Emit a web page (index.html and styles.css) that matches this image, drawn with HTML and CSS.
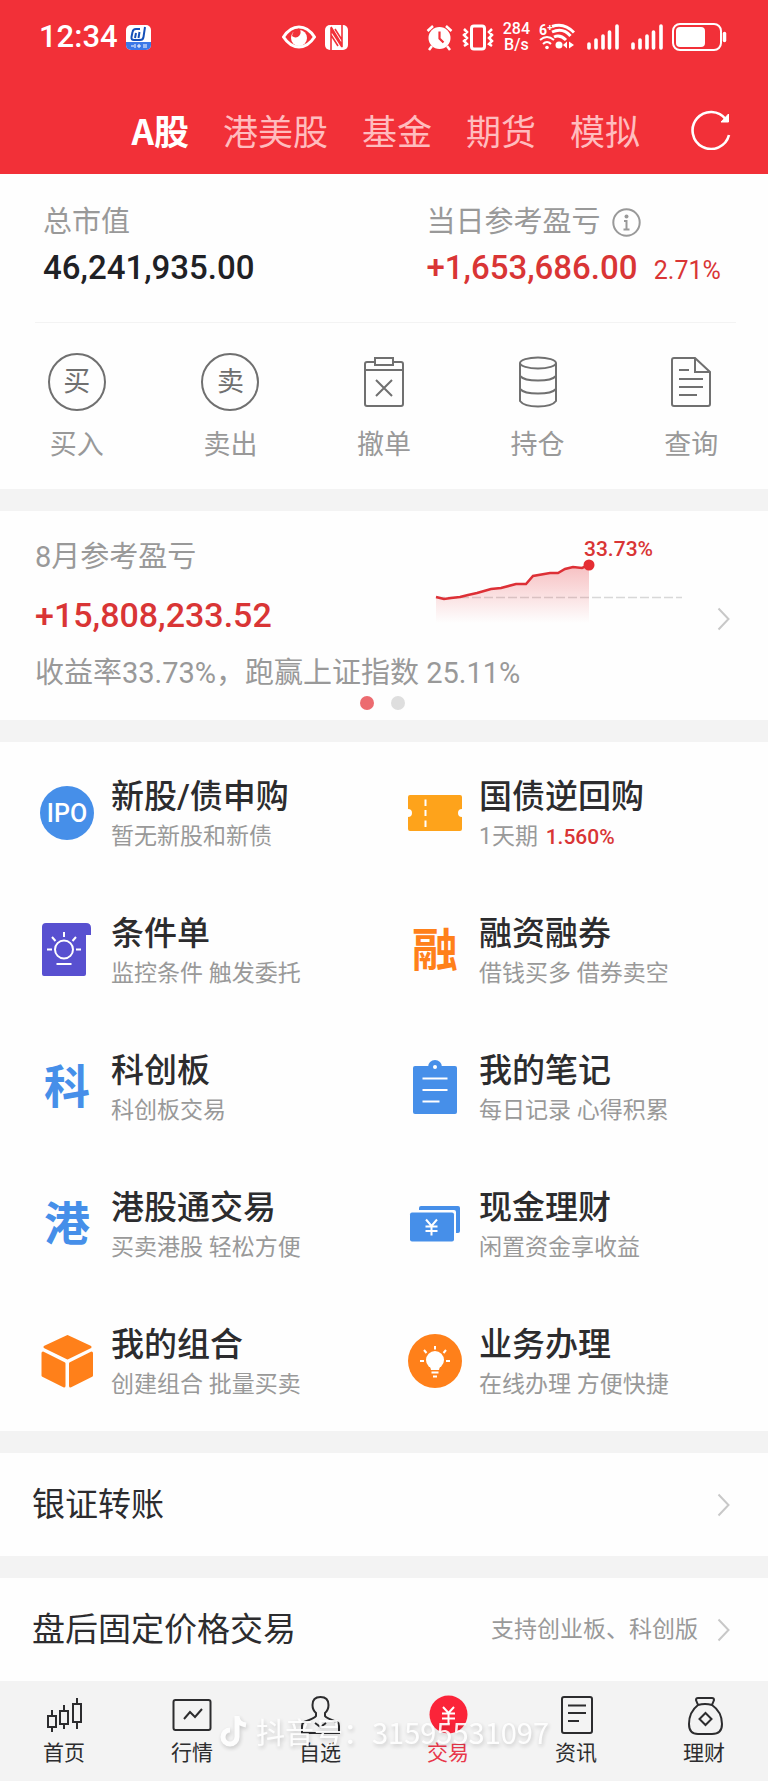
FILE: index.html
```
<!DOCTYPE html>
<html lang="zh-CN">

<head>
    <meta charset="UTF-8">
    <meta name="viewport" content="width=device-width, initial-scale=1.0">
    <title>交易</title>
    <link rel="stylesheet" href="styles.css">
</head>

<body>
    <header class="header">
        <div class="status-bar">
            <span class="clock">12:34</span>
            <svg class="app-badge" width="25" height="25" viewBox="0 0 25 25">
                <defs>
                    <clipPath id="badgeClip"><rect width="25" height="25" rx="5"/></clipPath>
                </defs>
                <g clip-path="url(#badgeClip)">
                    <rect width="25" height="25" fill="#fff"/>
                    <rect y="17" width="25" height="8" fill="#3b78e8"/>
                    <path d="M14 4H10Q7 4 6.500 7L5.500 12Q5 15 8 15H14Q17 15 17.500 12L19 2M10 8L9 13M13.500 7L12.500 13" fill="none" stroke="#1550b8" stroke-width="2"/>
                    <path d="M5 21h3M9 19v4M11 21h4M13 19v4M17 20h4M17 22h4" fill="none" stroke="#fff" stroke-width="1"/>
                </g>
            </svg>
            <div class="status-mid">
                <svg width="34" height="24" viewBox="0 0 34 24">
                    <path d="M1.500 12Q8 2 17 2T32.500 12Q26 22 17 22T1.500 12Z" fill="none" stroke="#fff" stroke-width="3"/>
                    <circle cx="17" cy="13" r="8" fill="#fff"/>
                    <path d="M17 3.500A5 5 0 0 1 10 11A8 8 0 0 1 17 3.500Z" fill="#f23038"/>
                </svg>
                <svg width="24" height="25" viewBox="0 0 24 25">
                    <rect width="23" height="25" rx="5" fill="#fff"/>
                    <path d="M6 25V5L17 22M17 0V20L6 2M6 10L13 21M17 15L10 4" fill="none" stroke="#f23038" stroke-width="1.600"/>
                </svg>
            </div>
            <div class="status-right">
                <svg width="27" height="27" viewBox="0 0 27 27">
                    <circle cx="13.500" cy="14" r="11" fill="#fff"/>
                    <path d="M1.500 7L7 2M20 2L25.500 7M6 22L3 26M21 22L24 26" stroke="#fff" stroke-width="2.500" fill="none"/>
                    <path d="M13.500 7.500V14.500L17.500 18.500" stroke="#f23038" stroke-width="2.200" fill="none"/>
                </svg>
                <svg width="32" height="27" viewBox="0 0 32 27">
                    <rect x="9.500" y="2" width="13" height="23" rx="2.500" fill="none" stroke="#fff" stroke-width="3"/>
                    <path d="M2 5L5 8L2 11L5 14L2 17L5 20L2 22M30 5L27 8L30 11L27 14L30 17L27 20L30 22" fill="none" stroke="#fff" stroke-width="2.500"/>
                </svg>
                <span class="net-speed">284<br>B/s</span>
                <svg width="36" height="28" viewBox="0 0 36 28">
                    <g fill="none" stroke="#fff" stroke-width="3">
                        <path d="M13 3.500Q25 -1 35 9.500"/>
                        <path d="M13 9Q24 4 31.500 13"/>
                        <path d="M15 14Q21 11 27 17"/>
                        <path d="M1 17Q8 11 15 17" stroke-width="2"/>
                        <path d="M4 21Q8 17 12 21" stroke-width="2"/>
                    </g>
                    <circle cx="8" cy="24.500" r="1.800" fill="#fff"/>
                    <circle cx="20" cy="22" r="3.500" fill="#fff"/>
                    <path d="M28 18.500V25.500L24 22ZM30 18.500V25.500L35 22Z" fill="#fff"/>
                    <text x="0" y="12" class="wifi-text">6⁺</text>
                </svg>
                <svg class="signal" width="32" height="26" viewBox="0 0 32 26">
                    <path d="M2 20V24M9 16V24M16 12V24M22.500 8V24M30 2V24" fill="none" stroke="#fff" stroke-width="3.600" stroke-linecap="round"/>
                </svg>
                <svg class="signal" width="32" height="26" viewBox="0 0 32 26">
                    <path d="M2 20V24M9 16V24M16 12V24M22.500 8V24M30 2V24" fill="none" stroke="#fff" stroke-width="3.600" stroke-linecap="round"/>
                </svg>
                <svg width="55" height="28" viewBox="0 0 55 28">
                    <rect x="1" y="1" width="48" height="26" rx="7" fill="none" stroke="#fff" stroke-width="2"/>
                    <rect x="4" y="4" width="29" height="20" rx="4" fill="#fff"/>
                    <path d="M52.500 10.500V17.500" stroke="#fff" stroke-width="3.500" stroke-linecap="round"/>
                </svg>
            </div>
        </div>
        <div class="market-tabs">
            <button class="market-tab active">A股</button>
            <button class="market-tab">港美股</button>
            <button class="market-tab">基金</button>
            <button class="market-tab">期货</button>
            <button class="market-tab">模拟</button>
            <button class="refresh" aria-label="刷新">
                <svg width="40" height="40" viewBox="0 0 40 40">
                    <path d="M35 9.500A18.500 18.500 0 1 0 38 25" fill="none" stroke="#fff" stroke-width="2.600"/>
                    <path d="M37.500 4V12H30Z" fill="#fff" stroke="#fff" stroke-width="1"/>
                </svg>
            </button>
        </div>
    </header>

    <main class="content">
        <section class="assets">
            <div class="asset-row">
                <div class="asset">
                    <div class="asset-label">总市值</div>
                    <div class="amount">46,241,935.00</div>
                </div>
                <div class="asset">
                    <div class="asset-label">当日参考盈亏
                        <svg width="29" height="29" viewBox="0 0 29 29">
                            <circle cx="14.500" cy="14.500" r="13.200" fill="none" stroke="#999" stroke-width="2"/>
                            <circle cx="14.500" cy="8.500" r="2" fill="#999"/>
                            <path d="M12 13H14.500V21M11.500 21.500H17.500" fill="none" stroke="#999" stroke-width="2"/>
                        </svg>
                    </div>
                    <div class="amount up">+1,653,686.00 <span class="percent">2.71%</span></div>
                </div>
            </div>
            <div class="actions">
                <a class="action" href="#">
                    <span class="action-icon round">买</span>
                    <span>买入</span>
                </a>
                <a class="action" href="#">
                    <span class="action-icon round">卖</span>
                    <span>卖出</span>
                </a>
                <a class="action" href="#">
                    <svg class="action-icon" viewBox="0 0 58 58">
                        <path d="M20 9H12Q10 9 10 11V51Q10 53 12 53H46Q48 53 48 51V11Q48 9 46 9H38M10 17H48M20 5H38V12H20ZM21 27L37 43M37 27L21 43"/>
                    </svg>
                    <span>撤单</span>
                </a>
                <a class="action" href="#">
                    <svg class="action-icon" viewBox="0 0 58 58">
                        <ellipse cx="29" cy="10" rx="18" ry="5.500"/>
                        <path d="M11 10V48Q15 53.500 29 53.500T47 48V10M11 23Q15 27.500 29 27.500T47 23M11 36Q15 40.500 29 40.500T47 36"/>
                    </svg>
                    <span>持仓</span>
                </a>
                <a class="action" href="#">
                    <svg class="action-icon" viewBox="0 0 58 58">
                        <path d="M12 5H33L48 19V51Q48 53 46 53H12Q10 53 10 51V7Q10 5 12 5ZM33 5V19H48M17 17H27M17 26H41M17 34H41M17 42H35"/>
                    </svg>
                    <span>查询</span>
                </a>
            </div>
        </section>

        <section class="profit">
            <div class="profit-top">
                <div class="profit-text">
                    <div class="asset-label">8月参考盈亏</div>
                    <div class="amount up">+15,808,233.52</div>
                </div>
                <svg class="chart" width="246" height="90" viewBox="0 0 246 90">
                    <defs>
                        <linearGradient id="area" x1="0" y1="0" x2="0" y2="1">
                            <stop offset="0" stop-color="#e52d33" stop-opacity="0.300"/>
                            <stop offset="1" stop-color="#e52d33" stop-opacity="0"/>
                        </linearGradient>
                    </defs>
                    <path d="M0 58.500H246" stroke="#d8d8d8" stroke-width="1.500" stroke-dasharray="9 3"/>
                    <path d="M0 58L8 60L15 59L24 58L32 56L41 54L55 50L65 49L80 45L90 45L97 37L114 34L122 34L129 30L137 28L146 29L153 26V84H0Z" fill="url(#area)"/>
                    <path d="M0 58L8 60L15 59L24 58L32 56L41 54L55 50L65 49L80 45L90 45L97 37L114 34L122 34L129 30L137 28L146 29L153 26" fill="none" stroke="#dd3036" stroke-width="2.500"/>
                    <circle cx="153" cy="26" r="5.500" fill="#e52d33"/>
                    <text x="148" y="17" class="chart-label">33.73%</text>
                </svg>
                <svg class="chevron" width="13" height="24" viewBox="0 0 13 24"><path d="M1.500 1.500L11.500 12L1.500 22.500"/></svg>
            </div>
            <div class="profit-note">收益率33.73%&#xFF0C;跑赢上证指数 25.11%</div>
            <div class="dots"><span class="dot on"></span><span class="dot"></span></div>
        </section>

        <section class="services">
            <a class="service" href="#">
                <svg class="service-icon" viewBox="0 0 54 54">
                    <circle cx="27" cy="27" r="27" fill="#468fe9"/>
                    <text x="27" y="36" class="ipo-text">IPO</text>
                </svg>
                <span class="service-text">
                    <span class="service-title">新股/债申购</span>
                    <span class="service-sub">暂无新股和新债</span>
                </span>
            </a>
            <a class="service" href="#">
                <svg class="service-icon" viewBox="0 0 54 54">
                    <path d="M2 9H52Q54 9 54 11V23A4 4 0 0 0 54 31V43Q54 45 52 45H2Q0 45 0 43V31A4 4 0 0 0 0 23V11Q0 9 2 9Z" fill="#fea31b"/>
                    <path d="M17.500 13.500V20M17.500 24V30M17.500 34.500V41" stroke="#fff" stroke-width="2"/>
                </svg>
                <span class="service-text">
                    <span class="service-title">国债逆回购</span>
                    <span class="service-sub">1天期 <b class="rate">1.560%</b></span>
                </span>
            </a>
            <a class="service" href="#">
                <svg class="service-icon" viewBox="0 0 54 54">
                    <path d="M6 0H46Q51 0 51 5V12H46V51Q46 53 44 53H4Q2 53 2 51V4Q2 0 6 0Z" fill="#5850d0"/>
                    <g fill="none" stroke="#fff" stroke-width="2">
                        <circle cx="24" cy="26.500" r="9"/>
                        <path d="M24 9V14M12 14L15.500 18M36 14L32.500 18M7 26.500H12M36 26.500H41M16.500 41H31.500"/>
                    </g>
                </svg>
                <span class="service-text">
                    <span class="service-title">条件单</span>
                    <span class="service-sub">监控条件 触发委托</span>
                </span>
            </a>
            <a class="service" href="#">
                <span class="service-icon char orange">融</span>
                <span class="service-text">
                    <span class="service-title">融资融券</span>
                    <span class="service-sub">借钱买多 借券卖空</span>
                </span>
            </a>
            <a class="service" href="#">
                <span class="service-icon char blue">科</span>
                <span class="service-text">
                    <span class="service-title">科创板</span>
                    <span class="service-sub">科创板交易</span>
                </span>
            </a>
            <a class="service" href="#">
                <svg class="service-icon" viewBox="0 0 54 54">
                    <circle cx="27" cy="7" r="7" fill="#468fe9"/>
                    <rect x="5" y="6" width="44" height="48" rx="2" fill="#468fe9"/>
                    <circle cx="27" cy="7" r="2" fill="#fff"/>
                    <path d="M14.500 18.500H39.500M14.500 30H39.500M14.500 41.500H31.500" stroke="#fff" stroke-width="2"/>
                </svg>
                <span class="service-text">
                    <span class="service-title">我的笔记</span>
                    <span class="service-sub">每日记录 心得积累</span>
                </span>
            </a>
            <a class="service" href="#">
                <span class="service-icon char blue">港</span>
                <span class="service-text">
                    <span class="service-title">港股通交易</span>
                    <span class="service-sub">买卖港股 轻松方便</span>
                </span>
            </a>
            <a class="service" href="#">
                <svg class="service-icon" viewBox="0 0 54 54">
                    <path d="M11 13V11Q11 9 13 9H50Q52 9 52 11V34Q52 36 50 36H48V15Q48 13 46 13Z" fill="#468fe9"/>
                    <rect x="2" y="15.500" width="44" height="29" rx="2" fill="#468fe9"/>
                    <path d="M18 22.500L23.500 29L29 22.500M17.500 29.500H29.500M17.500 34H29.500M23.500 29V38.500" fill="none" stroke="#fff" stroke-width="2"/>
                </svg>
                <span class="service-text">
                    <span class="service-title">现金理财</span>
                    <span class="service-sub">闲置资金享收益</span>
                </span>
            </a>
            <a class="service" href="#">
                <svg class="service-icon" viewBox="0 0 54 54">
                    <g fill="#ff801a" stroke="#ff801a" stroke-width="3" stroke-linejoin="round">
                        <path d="M27.500 2.500L50 13L27.500 24L5 13Z"/>
                        <path d="M3 19L24 29.500V52L3 41.500Z"/>
                        <path d="M51.500 19L30.500 29.500V52L51.500 41.500Z"/>
                    </g>
                </svg>
                <span class="service-text">
                    <span class="service-title">我的组合</span>
                    <span class="service-sub">创建组合 批量买卖</span>
                </span>
            </a>
            <a class="service" href="#">
                <svg class="service-icon" viewBox="0 0 54 54">
                    <circle cx="27" cy="27" r="27" fill="#ff801a"/>
                    <circle cx="27" cy="26" r="9" fill="#fff"/>
                    <path d="M22 32H32L31 36H23Z" fill="#fff"/>
                    <path d="M27 12V15.500M16 16L18.500 19M38 16L35.500 19M12 27H16M38 27H42M23.500 38.500H30.500M25 42.500H29" stroke="#fff" stroke-width="2"/>
                </svg>
                <span class="service-text">
                    <span class="service-title">业务办理</span>
                    <span class="service-sub">在线办理 方便快捷</span>
                </span>
            </a>
        </section>

        <a class="row" href="#">
            <span class="row-title">银证转账</span>
            <svg class="chevron" width="13" height="24" viewBox="0 0 13 24"><path d="M1.500 1.500L11.500 12L1.500 22.500"/></svg>
        </a>
        <a class="row" href="#">
            <span class="row-title">盘后固定价格交易</span>
            <span class="row-note">支持创业板、科创版</span>
            <svg class="chevron" width="13" height="24" viewBox="0 0 13 24"><path d="M1.500 1.500L11.500 12L1.500 22.500"/></svg>
        </a>
    </main>

    <nav class="tab-bar">
        <a class="tab" href="#">
            <svg class="tab-icon" viewBox="0 0 40 40">
                <path d="M4 21H12V32H4ZM8 15V21M8 32V37M16 16H24V29H16ZM20 10V16M20 29V34M29 9H37V27H29ZM33 3V9M33 27V34"/>
            </svg>
            <span>首页</span>
        </a>
        <a class="tab" href="#">
            <svg class="tab-icon" viewBox="0 0 40 40">
                <rect x="1.500" y="5" width="37" height="30" rx="2"/>
                <path d="M12 24L18 17L23 22L30 14"/>
            </svg>
            <span>行情</span>
        </a>
        <a class="tab" href="#">
            <svg class="tab-icon" viewBox="0 0 40 40">
                <path d="M16 21V18Q12.500 15 12.500 10Q12.500 2 20.500 2T28.500 10Q28.500 15 25 18V21Q26 23 37 27Q39 28 39 31V38H2V31Q2 28 4 27Q15 23 16 21ZM15 28L20.500 32L26 28"/>
            </svg>
            <span>自选</span>
        </a>
        <a class="tab active" href="#">
            <svg class="tab-icon" viewBox="0 0 40 40">
                <circle class="coin" cx="20.500" cy="19.500" r="19"/>
                <path class="yen" d="M15 12L20.500 18L26 12M14 18.500H27M14 23.500H27M20.500 18V29"/>
            </svg>
            <span>交易</span>
        </a>
        <a class="tab" href="#">
            <svg class="tab-icon" viewBox="0 0 40 40">
                <rect x="6" y="2" width="30" height="36" rx="2"/>
                <path d="M12 10.500H30M12 18H30M12 26H23"/>
            </svg>
            <span>资讯</span>
        </a>
        <a class="tab" href="#">
            <svg class="tab-icon" viewBox="0 0 40 40">
                <path d="M14 10L12 5Q12 3 14 3H28Q30 3 30 5L28 10M14 10Q21 8 28 10Q38 17 38 29Q38 39 28 39H14Q5 39 5 29Q5 17 14 10ZM21.500 18L27.500 24L21.500 30L15.500 24Z"/>
            </svg>
            <span>理财</span>
        </a>
        <div class="watermark">
            <svg width="29" height="32" viewBox="0 0 29 32">
                <path d="M18 1V22A7 7 0 1 1 11 15M18 2Q19 9 27 10" fill="none" stroke="#fff" stroke-width="5"/>
            </svg>
            <span>抖音号&#xFF1A;31595531097</span>
        </div>
    </nav>
</body>

</html>
```
FILE: styles.css
```
* {
    box-sizing: border-box;
}

body {
    margin: 0;
    font-family: Roboto, "Noto Sans CJK SC", sans-serif;
    background-color: #f3f3f3;
    color: #2c2c2e;
}

a {
    color: inherit;
    text-decoration: none;
}

svg {
    display: block;
    flex-shrink: 0;
}

button {
    padding: 0;
    border: none;
    background: none;
    font-family: inherit;
    cursor: pointer;
}

/* header */
.header {
    background-color: #f23038;
    color: #fff;
}

.status-bar {
    display: flex;
    align-items: center;
    height: 74px;
    padding: 0 41px 0 39px;
}

.clock {
    font-size: 31px;
    font-weight: 500;
    line-height: 36px;
}

.app-badge {
    margin-left: 8px;
}

.status-mid {
    display: flex;
    align-items: center;
    gap: 9px;
    margin-left: auto;
    margin-right: 77px;
}

.status-right {
    display: flex;
    align-items: center;
    gap: 9px;
}

.net-speed {
    font-size: 16px;
    font-weight: 500;
    line-height: 16px;
    text-align: center;
}

.wifi-text {
    font-size: 14px;
    font-weight: 700;
    fill: #fff;
}

.signal {
    margin-left: 3px;
}

.market-tabs {
    display: flex;
    align-items: center;
    justify-content: flex-end;
    gap: 34px;
    height: 100px;
    padding: 12px 37px 0 0;
}

.market-tab {
    font-family: "Noto Sans CJK SC", sans-serif;
    font-size: 35px;
    line-height: 44px;
    color: #ffbcbe;
}

.market-tab.active {
    font-weight: 700;
    color: #fff;
}

.refresh {
    margin-left: 17px;
}

/* sections */
.content {
    display: flex;
    flex-direction: column;
    gap: 22px;
}

.assets,
.profit,
.services,
.row {
    background-color: #fefefe;
}

.asset-row {
    display: grid;
    grid-template-columns: 1fr 1fr;
    margin: 0 32px 0 35px;
    padding: 30px 0 32px;
    border-bottom: 1px solid #f3f3f3;
}

.asset {
    padding-left: 8px;
    white-space: nowrap;
}

.asset + .asset {
    padding-left: 41px;
}

.asset-label {
    display: flex;
    align-items: center;
    gap: 11px;
    font-size: 29px;
    line-height: 36px;
    color: #999;
}

.amount {
    margin-top: 6px;
    font-size: 33px;
    font-weight: 500;
    line-height: 44px;
    color: #1f2125;
}

.amount.up {
    color: #d93535;
}

.percent {
    margin-left: 8px;
    font-size: 25px;
    font-weight: 400;
    line-height: 24px;
}

.actions {
    display: grid;
    grid-template-columns: repeat(5, 1fr);
    padding: 30px 0 26px;
}

.action {
    display: flex;
    flex-direction: column;
    align-items: center;
    gap: 16px;
    font-size: 27px;
    line-height: 36px;
    color: #999;
}

.action-icon {
    width: 58px;
    height: 58px;
    fill: none;
    stroke: #707070;
    stroke-width: 2;
}

.action-icon.round {
    border: 2px solid #707070;
    border-radius: 50%;
    line-height: 54px;
    text-align: center;
    color: #707070;
}

/* monthly profit */
.profit {
    padding: 28px 38px 10px 35px;
}

.profit-top {
    display: flex;
}

.profit-text .amount {
    margin-top: 18px;
    font-size: 34px;
}

.chart {
    margin-left: auto;
    margin-right: 35px;
    overflow: visible;
}

.chart-label {
    font-size: 21px;
    font-weight: 500;
    fill: #d93535;
}

.chevron {
    fill: none;
    stroke: #c8c8c8;
    stroke-width: 2;
}

.profit-top .chevron {
    align-self: flex-end;
    margin-bottom: 6px;
}

.profit-note {
    margin-top: 18px;
    font-size: 29px;
    line-height: 36px;
    color: #999;
}

.dots {
    display: flex;
    justify-content: center;
    gap: 17px;
    margin-top: 5px;
}

.dot {
    width: 14px;
    height: 14px;
    border-radius: 50%;
    background-color: #dedede;
}

.dot.on {
    background-color: #ec6b70;
}

/* services */
.services {
    display: grid;
    grid-template-columns: 1fr 1fr;
    grid-auto-rows: 137px;
    padding: 2px 16px;
}

.service {
    display: flex;
    align-items: center;
    gap: 17px;
    padding-left: 24px;
}

.service-icon {
    width: 54px;
    height: 54px;
}

.service-icon.char {
    font-size: 46px;
    font-weight: 700;
    line-height: 54px;
    text-align: center;
}

.blue {
    color: #468fe9;
}

.orange {
    color: #ff801a;
}

.ipo-text {
    font-size: 25px;
    font-weight: 500;
    text-anchor: middle;
    fill: #fff;
}

.service-text {
    display: flex;
    flex-direction: column;
    gap: 3px;
    padding-top: 6px;
}

.service-title {
    font-size: 33px;
    font-weight: 500;
    line-height: 40px;
}

.service-sub {
    font-size: 23px;
    line-height: 34px;
    color: #999;
}

.rate {
    margin-left: 2px;
    font-size: 21px;
    font-weight: 500;
    line-height: 24px;
    color: #d93535;
}

/* list rows */
.row {
    display: flex;
    align-items: center;
    height: 103px;
    padding: 0 38px 0 32px;
}

.row-title {
    margin-right: auto;
    font-size: 33px;
    line-height: 40px;
}

.row-note {
    margin-right: 19px;
    font-size: 23px;
    line-height: 28px;
    color: #999;
}

/* bottom bar */
.tab-bar {
    position: relative;
    display: grid;
    grid-template-columns: repeat(6, 1fr);
    padding: 14px 0;
}

.tab {
    display: flex;
    flex-direction: column;
    align-items: center;
    gap: 4px;
    font-size: 21px;
    line-height: 28px;
}

.tab.active {
    color: #e8374a;
}

.tab-icon {
    width: 40px;
    height: 40px;
    fill: none;
    stroke: #2c2c2e;
    stroke-width: 2;
}

.tab-icon .coin {
    fill: #fb2439;
    stroke: none;
}

.tab-icon .yen {
    stroke: #fff;
}

.watermark {
    position: absolute;
    top: 30px;
    left: 0;
    right: 0;
    display: flex;
    align-items: center;
    justify-content: center;
    gap: 8px;
    font-family: "Noto Sans CJK SC", sans-serif;
    font-size: 29px;
    line-height: 40px;
    color: #fff;
    opacity: 0.9;
    filter: drop-shadow(1px 2px 2px rgba(0, 0, 0, 0.2));
    pointer-events: none;
}
```
